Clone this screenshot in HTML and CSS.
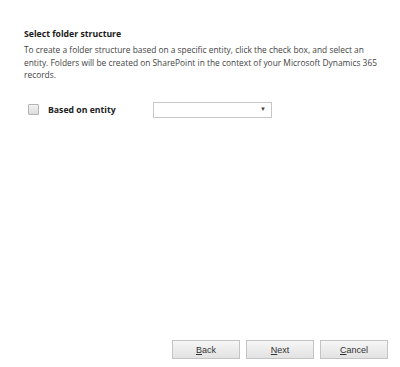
FILE: index.html
```html
<!DOCTYPE html>
<html>
<head>
<meta charset="utf-8">
<link rel="stylesheet" href="styles.css">
</head>
<body>
<div class="page">
  <div class="content">
    <div class="title">Select folder structure</div>
    <p class="desc">To create a folder structure based on a specific entity, click the check box, and select an entity. Folders will be created on SharePoint in the context of your Microsoft Dynamics 365 records.</p>
    <div class="row">
      <span class="check"></span>
      <span class="label">Based on entity</span>
      <span class="select"><span class="arrow">&#9660;</span></span>
    </div>
  </div>
  <div class="buttons">
    <button class="btn"><u>B</u>ack</button>
    <button class="btn"><u>N</u>ext</button>
    <button class="btn"><u>C</u>ancel</button>
  </div>
</div>
</body>
</html>
```
FILE: styles.css
```css
html, body {
  margin: 0;
  padding: 0;
  background: #fff;
}
.page {
  width: 400px;
  height: 367px;
  display: flex;
  flex-direction: column;
  justify-content: space-between;
  font-family: "Open Sans", "Noto Sans", sans-serif;
}
.content {
  padding: 28px 0 0 24px;
}
.title {
  font-size: 8.7px;
  font-weight: bold;
  color: #1a1a1a;
  line-height: 12px;
}
.desc {
  margin: 4px 0 0 0;
  width: 362px;
  font-size: 8.4px;
  line-height: 12.5px;
  color: #444;
}
.row {
  display: flex;
  align-items: center;
  margin-top: 20px;
}
.check {
  width: 9px;
  height: 9px;
  margin-left: 4px;
  border: 1px solid #b4b4b4;
  background: linear-gradient(#f2f2f2, #dcdcdc);
  border-radius: 1px;
}
.label {
  margin-left: 9px;
  width: 105px;
  font-size: 8.7px;
  font-weight: bold;
  color: #222;
}
.select {
  position: relative;
  width: 117px;
  height: 14px;
  border: 1px solid #c6c6c6;
  background: #fff;
}
.arrow {
  position: absolute;
  right: 5px;
  top: 2px;
  font-size: 6px;
  color: #444;
}
.buttons {
  display: flex;
  justify-content: flex-end;
  gap: 6px;
  padding: 0 12px 8px 0;
}
.btn {
  width: 68px;
  height: 19px;
  padding: 0;
  border: 1px solid #c4c4c4;
  background: linear-gradient(#f6f6f6, #e2e2e2);
  font-family: "Liberation Sans", Arial, sans-serif;
  font-size: 9px;
  color: #333;
}
.btn u {
  text-decoration: underline;
}
```
